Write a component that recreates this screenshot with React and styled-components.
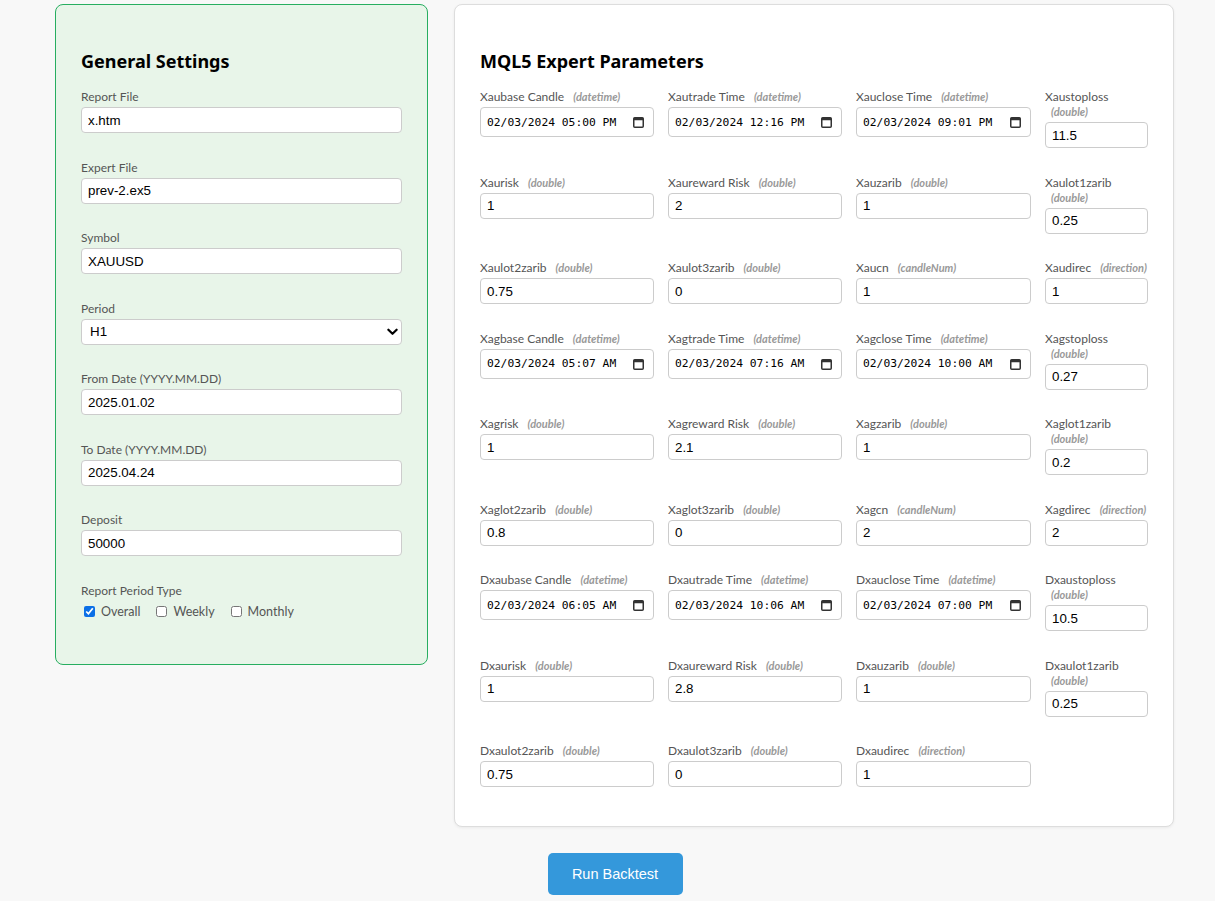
import React from "react";
import styled, { createGlobalStyle } from "styled-components";

const GlobalStyle = createGlobalStyle`
  html, body { margin: 0; padding: 0; background: #f8f8f8; }
  body { font-family: Lato, "Noto Sans", sans-serif; color: #222; }
  * { box-sizing: border-box; }
`;

const Page = styled.div`
  width: 1120px;
  margin: 4px 0 0 55px;
  display: flex;
  flex-direction: column;
  align-items: center;
`;

const Columns = styled.div`
  display: flex;
  align-items: flex-start;
  gap: 26px;
  width: 100%;
`;

const Panel = styled.section`
  border-radius: 8px;
  padding: 25px 25px ${(p) => p.$bottom}px;
  background: ${(p) => (p.$green ? "#e8f5e9" : "#ffffff")};
  border: 1px solid ${(p) => (p.$green ? "#27ae60" : "#dddddd")};
  box-shadow: ${(p) => (p.$green ? "none" : "0 1px 3px rgba(0,0,0,0.06)")};
  width: ${(p) => p.$width}px;
  flex: none;
`;

const Heading = styled.h2`
  margin: 19px 0 16px;
  font-family: "Noto Sans", "Open Sans", sans-serif;
  font-size: 18px;
  line-height: 24px;
  font-weight: 700;
  color: #000;
`;

const Field = styled.div`
  display: flex;
  flex-direction: column;
  margin-bottom: ${(p) => (p.$last ? 0 : 26.5)}px;
  min-width: 0;
`;

const Label = styled.label`
  display: block;
  font-family: Lato, "Noto Sans", sans-serif;
  font-size: 12px;
  line-height: 15px;
  color: #555;
  margin-bottom: 3px;
`;

const TypeHint = styled.span`
  display: inline-block;
  vertical-align: top;
  margin-left: 6px;
  font-size: 11px;
  line-height: 15px;
  font-style: italic;
  font-weight: 700;
  color: #999;
`;

const TextInput = styled.input`
  width: 100%;
  height: 26px;
  padding: 4px 6px;
  border: 1px solid #cccccc;
  border-radius: 4px;
  background: #fff;
  font-family: "Liberation Sans", Arial, sans-serif;
  font-size: 13.33px;
  color: #000;
  outline: none;
`;

const DateWrap = styled.div`
  position: relative;
  width: 100%;
`;

const DateInput = styled.input`
  width: 100%;
  height: 30px;
  padding: 4px 24px 4px 6px;
  border: 1px solid #cccccc;
  border-radius: 4px;
  background: #fff;
  font-family: "DejaVu Sans Mono", "Liberation Mono", monospace;
  font-size: 11.3px;
  color: #000;
  outline: none;
`;

const CalendarIcon = styled.svg`
  position: absolute;
  right: 10px;
  top: 9px;
  width: 11px;
  height: 12px;
  pointer-events: none;
`;

const SelectWrap = styled.div`
  position: relative;
  width: 100%;
`;

const Select = styled.select`
  width: 100%;
  height: 26px;
  padding: 0 8px;
  border: 1px solid #cccccc;
  border-radius: 4px;
  background: #fff;
  font-family: "Liberation Sans", Arial, sans-serif;
  font-size: 13.33px;
  color: #000;
  appearance: none;
  -webkit-appearance: none;
  outline: none;
`;

const Chevron = styled.svg`
  position: absolute;
  right: 4px;
  top: 8px;
  width: 11px;
  height: 10px;
  pointer-events: none;
`;

const CheckRow = styled.div`
  display: flex;
  align-items: center;
  gap: 16px;
  padding-left: 3px;
  margin-top: 3px;
`;

const CheckOption = styled.label`
  display: flex;
  align-items: center;
  gap: 6px;
  font-family: Lato, "Noto Sans", sans-serif;
  font-size: 12.5px;
  line-height: 16px;
  color: #555;
`;

const Check = styled.input`
  margin: 0;
  width: 11px;
  height: 11px;
  accent-color: #0b6fe6;
`;

const ParamGrid = styled.div`
  display: grid;
  grid-template-columns: 174px 174px 175px 103px;
  column-gap: 14px;
  row-gap: 26.5px;
  align-items: start;
`;

const RunButton = styled.button`
  margin-top: 26px;
  width: 135px;
  height: 42px;
  border: none;
  border-radius: 5px;
  background: #3498db;
  color: #fff;
  font-family: "Liberation Sans", Arial, sans-serif;
  font-size: 14.5px;
  cursor: pointer;
`;

const general = [
  { label: "Report File", value: "x.htm" },
  { label: "Expert File", value: "prev-2.ex5" },
  { label: "Symbol", value: "XAUUSD" },
  { label: "Period", select: true, value: "H1" },
  { label: "From Date (YYYY.MM.DD)", value: "2025.01.02" },
  { label: "To Date (YYYY.MM.DD)", value: "2025.04.24" },
  { label: "Deposit", value: "50000" },
];

const params = [
  ["Xaubase Candle", "datetime", "02/03/2024 05:00 PM"],
  ["Xautrade Time", "datetime", "02/03/2024 12:16 PM"],
  ["Xauclose Time", "datetime", "02/03/2024 09:01 PM"],
  ["Xaustoploss", "double", "11.5"],
  ["Xaurisk", "double", "1"],
  ["Xaureward Risk", "double", "2"],
  ["Xauzarib", "double", "1"],
  ["Xaulot1zarib", "double", "0.25"],
  ["Xaulot2zarib", "double", "0.75"],
  ["Xaulot3zarib", "double", "0"],
  ["Xaucn", "candleNum", "1"],
  ["Xaudirec", "direction", "1"],
  ["Xagbase Candle", "datetime", "02/03/2024 05:07 AM"],
  ["Xagtrade Time", "datetime", "02/03/2024 07:16 AM"],
  ["Xagclose Time", "datetime", "02/03/2024 10:00 AM"],
  ["Xagstoploss", "double", "0.27"],
  ["Xagrisk", "double", "1"],
  ["Xagreward Risk", "double", "2.1"],
  ["Xagzarib", "double", "1"],
  ["Xaglot1zarib", "double", "0.2"],
  ["Xaglot2zarib", "double", "0.8"],
  ["Xaglot3zarib", "double", "0"],
  ["Xagcn", "candleNum", "2"],
  ["Xagdirec", "direction", "2"],
  ["Dxaubase Candle", "datetime", "02/03/2024 06:05 AM"],
  ["Dxautrade Time", "datetime", "02/03/2024 10:06 AM"],
  ["Dxauclose Time", "datetime", "02/03/2024 07:00 PM"],
  ["Dxaustoploss", "double", "10.5"],
  ["Dxaurisk", "double", "1"],
  ["Dxaureward Risk", "double", "2.8"],
  ["Dxauzarib", "double", "1"],
  ["Dxaulot1zarib", "double", "0.25"],
  ["Dxaulot2zarib", "double", "0.75"],
  ["Dxaulot3zarib", "double", "0"],
  ["Dxaudirec", "direction", "1"],
];

function DateTimeField({ value }) {
  return (
    <DateWrap>
      <DateInput defaultValue={value} />
      <CalendarIcon viewBox="0 0 11 12">
        <rect x="0.75" y="1.75" width="9.5" height="9.5" rx="1" fill="none" stroke="#333" strokeWidth="1.5" />
        <rect x="0.75" y="1.75" width="9.5" height="2.5" fill="#333" />
      </CalendarIcon>
    </DateWrap>
  );
}

export default function App() {
  return (
    <>
      <GlobalStyle />
      <Page>
        <Columns>
          <Panel $green $width={373} $bottom={44}>
            <Heading>General Settings</Heading>
            {general.map((f) => (
              <Field key={f.label}>
                <Label>{f.label}</Label>
                {f.select ? (
                  <SelectWrap>
                    <Select defaultValue="H1">
                      <option>M1</option>
                      <option>M5</option>
                      <option>M15</option>
                      <option>H1</option>
                      <option>H4</option>
                      <option>D1</option>
                    </Select>
                    <Chevron viewBox="0 0 12 10">
                      <path d="M1.5 2.5 L6 7 L10.5 2.5" fill="none" stroke="#000" strokeWidth="2.4" strokeLinecap="round" strokeLinejoin="round" />
                    </Chevron>
                  </SelectWrap>
                ) : (
                  <TextInput defaultValue={f.value} />
                )}
              </Field>
            ))}
            <Field $last>
              <Label>Report Period Type</Label>
              <CheckRow>
                <CheckOption>
                  <Check type="checkbox" defaultChecked />
                  Overall
                </CheckOption>
                <CheckOption>
                  <Check type="checkbox" />
                  Weekly
                </CheckOption>
                <CheckOption>
                  <Check type="checkbox" />
                  Monthly
                </CheckOption>
              </CheckRow>
            </Field>
          </Panel>
          <Panel $width={720} $bottom={39}>
            <Heading>MQL5 Expert Parameters</Heading>
            <ParamGrid>
              {params.map(([name, type, value]) => (
                <Field key={name} $last>
                  <Label>
                    {name} <TypeHint>({type})</TypeHint>
                  </Label>
                  {type === "datetime" ? (
                    <DateTimeField value={value} />
                  ) : (
                    <TextInput defaultValue={value} />
                  )}
                </Field>
              ))}
            </ParamGrid>
          </Panel>
        </Columns>
        <RunButton>Run Backtest</RunButton>
      </Page>
    </>
  );
}
